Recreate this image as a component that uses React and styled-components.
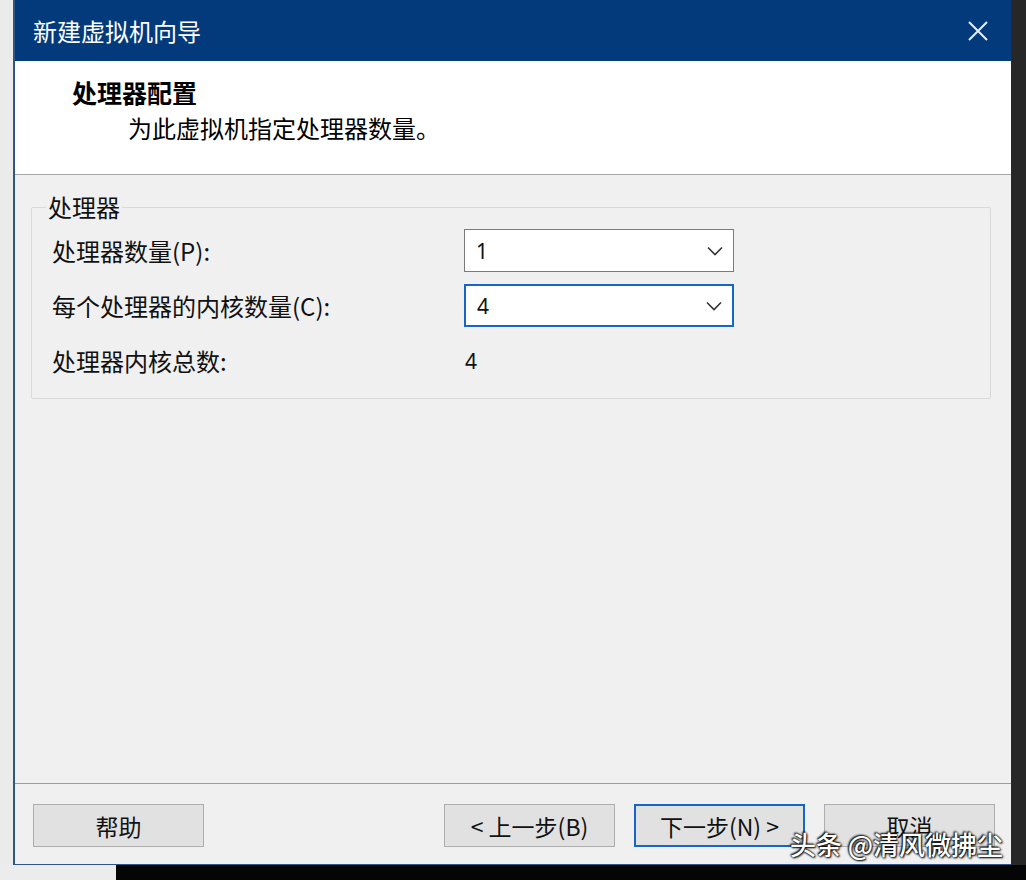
import React from "react";
import styled, { createGlobalStyle } from "styled-components";

const Global = createGlobalStyle`
  html, body { margin: 0; padding: 0; }
  body {
    width: 1026px;
    height: 880px;
    overflow: hidden;
    font-family: "Noto Sans", "Noto Sans CJK SC", sans-serif;
  }
  * { box-sizing: border-box; }
`;

const Page = styled.div`
  display: grid;
  grid-template-columns: 13px 998px 15px;
  grid-template-rows: 865px 15px;
  width: 1026px;
  height: 880px;
`;

const Strip = styled.div`
  background: ${(p) => p.$bg};
`;

const BottomStrip = styled.div`
  grid-column: 1 / 4;
  display: grid;
  grid-template-columns: 116px 1fr;
  background: #050505;
  &::before {
    content: "";
    background: #ececec;
  }
`;

const Dialog = styled.div`
  position: relative;
  display: flex;
  flex-direction: column;
  background: #f0f0f0;
  border-left: 2px solid #2f5687;
  border-bottom: 1px solid #2f5687;
`;

const TitleBar = styled.div`
  height: 61px;
  display: flex;
  align-items: center;
  justify-content: space-between;
  padding: 0 22px 0 18px;
  background: #033a7b;
  color: #fff;
  font-size: 24px;
  font-family: "Noto Sans CJK SC", sans-serif;
`;

const CloseIcon = () => (
  <svg width="22" height="22" viewBox="0 0 22 22">
    <path d="M2 2 L20 20 M20 2 L2 20" stroke="#e4eefc" strokeWidth="2" />
  </svg>
);

const Header = styled.div`
  height: 114px;
  background: #fff;
  border-bottom: 1px solid #a6a6a6;
  padding: 15px 0 0 57px;
  font-family: "Noto Sans CJK SC", sans-serif;
  color: #000;
`;

const Heading = styled.div`
  font-size: 25px;
  font-weight: 700;
  line-height: 32px;
`;

const SubHeading = styled.div`
  font-size: 24px;
  line-height: 32px;
  margin: 4px 0 0 56px;
`;

const Body = styled.div`
  flex: 1;
  padding: 18px 20px 0 16px;
`;

const GroupBox = styled.fieldset`
  margin: 0;
  height: 206px;
  border: 1px solid #d9d9d9;
  border-radius: 2px;
  padding: 2px 0 0 20px;
  font-family: "Noto Sans CJK SC", sans-serif;
  font-size: 24px;
  color: #111;
`;

const Legend = styled.legend`
  padding: 0 2px;
  margin-left: -6px;
  line-height: 28px;
  font-size: 24px;
`;

const Grid = styled.div`
  display: grid;
  grid-template-columns: 412px 270px;
  grid-auto-rows: 55px;
  align-items: center;
`;

const Label = styled.div`
  line-height: 30px;
`;

const SelectBox = styled.div`
  height: 43px;
  display: flex;
  align-items: center;
  justify-content: space-between;
  padding: 0 10px 0 11px;
  background: #fff;
  border: ${(p) => (p.$focus ? "2px solid #1467c4" : "1px solid #7a7a7a")};
  font-family: "Noto Sans", sans-serif;
  font-size: 21px;
  color: #111;
`;

const Value = styled.div`
  font-family: "Noto Sans", sans-serif;
  font-size: 21px;
  padding-left: 1px;
`;

const Chevron = () => (
  <svg width="16" height="10" viewBox="0 0 16 10">
    <path d="M1 1.5 L8 8.5 L15 1.5" fill="none" stroke="#333" strokeWidth="1.6" />
  </svg>
);

const Footer = styled.div`
  height: 81px;
  border-top: 1px solid #9c9c9c;
  display: flex;
  align-items: flex-start;
  padding: 20px 0 0 18px;
  gap: 19px;
`;

const Button = styled.div`
  width: 171px;
  height: 43px;
  display: flex;
  align-items: center;
  justify-content: center;
  background: #e1e1e1;
  border: ${(p) => (p.$primary ? "2px solid #1467c4" : "1px solid #adadad")};
  font-family: "Noto Sans CJK SC", sans-serif;
  font-size: 23px;
  color: #111;
  margin-left: ${(p) => p.$push || 0}px;
`;

const Watermark = styled.div`
  position: absolute;
  right: 8px;
  bottom: 2px;
  color: #fff;
  font-family: "Noto Sans CJK SC", sans-serif;
  font-size: 26px;
  font-weight: 500;
  text-shadow: 0 0 2px #000, 1px 1px 2px #000, -1px -1px 2px #000;
`;

export default function App() {
  return (
    <>
      <Global />
      <Page>
        <Strip $bg="#ebebeb" />
        <Dialog>
          <TitleBar>
            <span>新建虚拟机向导</span>
            <CloseIcon />
          </TitleBar>
          <Header>
            <Heading>处理器配置</Heading>
            <SubHeading>为此虚拟机指定处理器数量。</SubHeading>
          </Header>
          <Body>
            <GroupBox>
              <Legend>处理器</Legend>
              <Grid>
                <Label>处理器数量(P):</Label>
                <SelectBox>
                  <span>1</span>
                  <Chevron />
                </SelectBox>
                <Label>每个处理器的内核数量(C):</Label>
                <SelectBox $focus>
                  <span>4</span>
                  <Chevron />
                </SelectBox>
                <Label>处理器内核总数:</Label>
                <Value>4</Value>
              </Grid>
            </GroupBox>
          </Body>
          <Footer>
            <Button>帮助</Button>
            <Button $push={221}>&lt; 上一步(B)</Button>
            <Button $primary>下一步(N) &gt;</Button>
            <Button>取消</Button>
          </Footer>
          <Watermark>头条 @清风微拂尘</Watermark>
        </Dialog>
        <Strip $bg="#272727" />
        <BottomStrip />
      </Page>
    </>
  );
}
